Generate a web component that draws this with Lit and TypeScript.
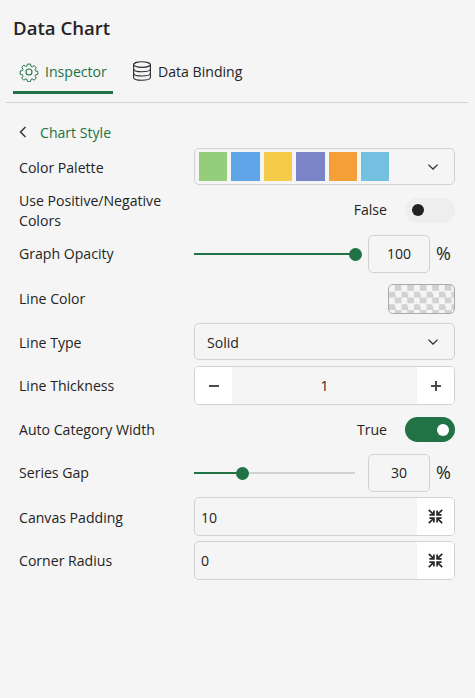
import { LitElement, html, css, svg } from "lit";
import { customElement } from "lit/decorators.js";

const chevron = html`<svg class="chev" viewBox="0 0 12 8" width="12" height="8"><path d="M1.4 1.6 6 6l4.6-4.4" fill="none" stroke="#333" stroke-width="1.3"/></svg>`;
const arrow = svg`<path d="M.8.8 5.2 5.2M5.9 1.4V5.9H1.4" fill="none" stroke="#262626" stroke-width="1.7"/>`;
const compress = html`<svg viewBox="0 0 15 15" width="15" height="15">
  <g>${arrow}</g>
  <g transform="translate(15 0) scale(-1 1)">${arrow}</g>
  <g transform="translate(0 15) scale(1 -1)">${arrow}</g>
  <g transform="translate(15 15) scale(-1 -1)">${arrow}</g>
</svg>`;
const gear = html`<svg viewBox="0 0 20 20" width="20" height="20" fill="none" stroke="#217346" stroke-width="1.1">
  <circle cx="10" cy="10" r="3"/>
  <path d="M8.3 1.2h3.4l.5 2.5 1.4.6 2.2-1.4 2.3 2.4-1.4 2.1.6 1.5 2.5.5v3.2l-2.5.5-.6 1.5 1.4 2.1-2.3 2.4-2.2-1.4-1.4.6-.5 2.5H8.3l-.5-2.5-1.4-.6-2.2 1.4-2.3-2.4 1.4-2.1-.6-1.5-2.5-.5V8.9l2.5-.5.6-1.5-1.4-2.1 2.3-2.4 2.2 1.4 1.4-.6z" transform="translate(1 1) scale(.9)"/>
</svg>`;
const db = html`<svg viewBox="0 0 20 20" width="20" height="20" fill="none" stroke="#2b2b2b" stroke-width="1.1">
  <ellipse cx="10" cy="3.6" rx="8.4" ry="2.8"/>
  <path d="M1.6 3.6v12.8c0 1.6 3.8 2.8 8.4 2.8s8.4-1.2 8.4-2.8V3.6"/>
  <path d="M1.6 8c0 1.6 3.8 2.8 8.4 2.8s8.4-1.2 8.4-2.8M1.6 12.2c0 1.6 3.8 2.8 8.4 2.8s8.4-1.2 8.4-2.8"/>
</svg>`;
const minus = html`<svg viewBox="0 0 12 12" width="12" height="12"><path d="M1 6h10" stroke="#4a4a4a" stroke-width="2"/></svg>`;
const plus = html`<svg viewBox="0 0 12 12" width="12" height="12"><path d="M1 6h10M6 1v10" stroke="#4a4a4a" stroke-width="2"/></svg>`;

const palette = ["#95ce7a", "#5fa5e8", "#f6cb48", "#7a84c6", "#f59f37", "#73c0e0"];

@customElement("app-root")
export class AppRoot extends LitElement {
  static styles = css`
    :host {
      display: block;
      width: 475px;
      height: 698px;
      box-sizing: border-box;
      background: #f5f5f5;
      color: #242424;
      font-family: "Open Sans", "Noto Sans", sans-serif;
      font-size: 14.1px;
      overflow: hidden;
    }
    .title {
      padding: 16px 0 0 13px;
      height: 40px;
      box-sizing: border-box;
      font-size: 18.6px;
      font-weight: 600;
      line-height: 24px;
    }
    .tabs {
      display: flex;
      height: 62px;
      margin: 0 7px 0 6px;
      padding-left: 7px;
      border-bottom: 1px solid #d4d4d4;
      gap: 19px;
    }
    .tab {
      display: flex;
      align-items: center;
      gap: 6px;
    }
    .tab.active {
      width: 100px;
      padding-left: 6px;
      box-sizing: border-box;
      height: 42px;
      margin-top: 12px;
      border-bottom: 3px solid #217346;
      color: #217346;
    }
    .tab.plain { height: 42px; margin-top: 10px; }
    .back {
      display: flex;
      align-items: center;
      gap: 13px;
      height: 20px;
      margin: 19px 0 6px 19px;
      color: #217346;
    }
    .rows {
      display: flex;
      flex-direction: column;
      padding: 0 20px 0 19px;
    }
    .row {
      display: grid;
      grid-template-columns: 175px 261px;
      align-items: center;
      line-height: 20px;
    }
    .nudge { padding-top: 2px; }
    .h-palette { height: 37px; }
    .h-toggle2 { height: 50px; }
    .h-slider { height: 38px; }
    .h-swatch { height: 50px; }
    .h-select { height: 37px; }
    .h-step { height: 39px; margin-top: 6px; }
    .h-toggle { height: 49px; }
    .h-input { height: 39px; margin-top: 5px; }
    .box {
      box-sizing: border-box;
      border: 1px solid #d1d1d1;
      border-radius: 5px;
      display: flex;
      align-items: center;
      overflow: hidden;
    }
    .select { height: 37px; padding: 0 15px 0 12px; justify-content: space-between; }
    .sw { display: flex; gap: 4px; }
    .sw i { display: block; width: 28.4px; height: 29px; }
    .palette { padding-left: 4px; }
    .end { display: flex; justify-content: flex-end; align-items: center; gap: 18px; }
    .toggle {
      width: 50px;
      height: 25px;
      border-radius: 13px;
      background: #eeeeee;
      display: flex;
      align-items: center;
      padding: 0 7px;
      box-sizing: border-box;
    }
    .toggle i { width: 12px; height: 12px; border-radius: 50%; background: #222; display: block; }
    .toggle.on { background: #217346; justify-content: flex-end; padding: 0 6px; }
    .toggle.on i { background: #fff; }
    .slide { display: flex; align-items: center; }
    .track { position: relative; width: 161px; height: 2px; background: #d1d1d1; }
    .fill { height: 100%; background: #217346; }
    .knob {
      position: absolute;
      top: -5.5px;
      width: 13px;
      height: 13px;
      margin-left: -6.5px;
      border-radius: 50%;
      background: #217346;
    }
    .num {
      margin-left: 13px;
      width: 62px;
      height: 38px;
      justify-content: center;
    }
    .pct { margin-left: 6px; font-size: 18px; line-height: 20px; padding-bottom: 2px; }
    .check {
      justify-self: end;
      margin-top: 2px;
      width: 67px;
      height: 30px;
      box-sizing: border-box;
      border: 1px solid #aaa;
      border-radius: 5px;
      background-color: #f5f5f5;
      background-image: conic-gradient(#d2d2d2 25%, #f5f5f5 0 50%, #d2d2d2 0 75%, #f5f5f5 0);
      background-size: 12.5px 12.5px;
    }
    .step { height: 39px; justify-content: space-between; }
    .step b, .cap {
      background: #fff;
      align-self: stretch;
      display: flex;
      align-items: center;
      justify-content: center;
      width: 37px;
    }
    .input { height: 39px; justify-content: space-between; padding-left: 6px; }
  `;

  private slider(value: number) {
    return html`<div class="slide">
      <div class="track">
        <div class="fill" style="width:${value}%"></div>
        <div class="knob" style="left:${value}%"></div>
      </div>
      <div class="box num">${value}</div>
      <span class="pct">%</span>
    </div>`;
  }

  render() {
    return html`
      <div class="title">Data Chart</div>
      <div class="tabs">
        <div class="tab active">${gear}<span>Inspector</span></div>
        <div class="tab plain">${db}<span>Data Binding</span></div>
      </div>
      <div class="back">
        <svg viewBox="0 0 8 12" width="8" height="12"><path d="M6.5 1 1.5 6l5 5" fill="none" stroke="#333" stroke-width="1.5"/></svg>
        <span>Chart Style</span>
      </div>
      <div class="rows">
        <div class="row h-palette">
          <span class="nudge">Color Palette</span>
          <div class="box select palette">
            <div class="sw">${palette.map((c) => html`<i style="background:${c}"></i>`)}</div>
            ${chevron}
          </div>
        </div>
        <div class="row h-toggle2">
          <span class="nudge">Use Positive/Negative Colors</span>
          <div class="end"><span>False</span><div class="toggle"><i></i></div></div>
        </div>
        <div class="row h-slider"><span>Graph Opacity</span>${this.slider(100)}</div>
        <div class="row h-swatch"><span class="nudge">Line Color</span><div class="check"></div></div>
        <div class="row h-select">
          <span class="nudge">Line Type</span>
          <div class="box select"><span class="nudge">Solid</span>${chevron}</div>
        </div>
        <div class="row h-step">
          <span>Line Thickness</span>
          <div class="box step"><b>${minus}</b><span>1</span><b>${plus}</b></div>
        </div>
        <div class="row h-toggle">
          <span>Auto Category Width</span>
          <div class="end"><span>True</span><div class="toggle on"><i></i></div></div>
        </div>
        <div class="row h-slider"><span>Series Gap</span>${this.slider(30)}</div>
        <div class="row h-input">
          <span class="nudge">Canvas Padding</span>
          <div class="box input"><span class="nudge">10</span><div class="cap">${compress}</div></div>
        </div>
        <div class="row h-input">
          <span>Corner Radius</span>
          <div class="box input"><span>0</span><div class="cap">${compress}</div></div>
        </div>
      </div>
    `;
  }
}
